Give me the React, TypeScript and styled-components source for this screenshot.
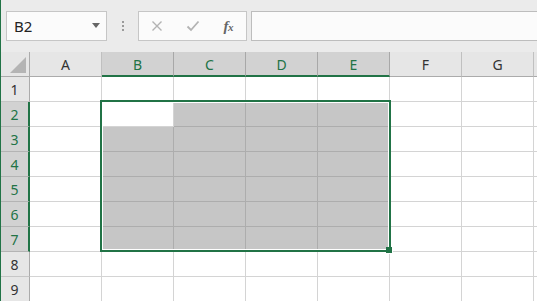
import React from "react";
import styled, { createGlobalStyle, css } from "styled-components";

const GREEN = "#217346";

const Global = createGlobalStyle`
  html, body { margin: 0; padding: 0; background: #ffffff; overflow: hidden; }
  body { font-family: "Noto Sans", "Liberation Sans", Arial, sans-serif; }
`;

const Window = styled.div`
  width: 537px;
  height: 301px;
  overflow: hidden;
  border-left: 1px solid ${GREEN};
  box-sizing: border-box;
  background: #ffffff;
`;

const Toolbar = styled.div`
  height: 52px;
  box-sizing: border-box;
  padding: 11px 0 0 5px;
  background: #ebebeb;
  display: flex;
  align-items: flex-start;
`;

const NameBox = styled.div`
  width: 101px;
  height: 30px;
  box-sizing: border-box;
  border: 1px solid #c6c6c6;
  background: #fbfbfb;
  display: flex;
  align-items: center;
  justify-content: space-between;
  padding: 0 6px 0 7px;
  font-size: 15px;
  color: #222;
`;

const Caret = styled.span`
  width: 0;
  height: 0;
  border-left: 4px solid transparent;
  border-right: 4px solid transparent;
  border-top: 5px solid #666;
  margin-top: -1px;
`;

const Grip = styled.div`
  width: 31px;
  height: 30px;
  display: flex;
  flex-direction: column;
  align-items: center;
  justify-content: center;
  gap: 2px;
`;

const Dot = styled.span`
  width: 2px;
  height: 2px;
  background: #9a9a9a;
`;

const FxBox = styled.div`
  width: 109px;
  height: 30px;
  box-sizing: border-box;
  border: 1px solid #c6c6c6;
  background: #fbfbfb;
  display: flex;
`;

const FxSlot = styled.div`
  width: 36px;
  height: 28px;
  display: flex;
  align-items: center;
  justify-content: center;
`;

const FxLabel = styled.span`
  font-family: "Liberation Serif", "Times New Roman", serif;
  font-style: italic;
  font-weight: bold;
  font-size: 15px;
  color: #666;
  letter-spacing: -0.5px;
  & > small { font-size: 11px; }
`;

const FormulaInput = styled.div`
  flex: 1;
  margin-left: 4px;
  height: 30px;
  box-sizing: border-box;
  border: 1px solid #bdbdbd;
  border-right: none;
  background: #fbfbfb;
`;

const GridWrap = styled.div`
  position: relative;
`;

const Grid = styled.div`
  display: grid;
  grid-template-columns: 29px repeat(8, 72px);
  grid-template-rows: repeat(10, 25px);
`;

const Cell = styled.div<{ $fill?: boolean }>`
  box-sizing: border-box;
  border-right: 1px solid ${(p) => (p.$fill ? "#adadad" : "#d4d4d4")};
  border-bottom: 1px solid ${(p) => (p.$fill ? "#adadad" : "#d4d4d4")};
  background: ${(p) => (p.$fill ? "#c6c6c6" : "#ffffff")};
`;

const headerBase = css`
  box-sizing: border-box;
  display: flex;
  align-items: center;
  justify-content: center;
  font-size: 14px;
  padding-top: 1px;
`;

const ColHead = styled.div<{ $sel?: boolean }>`
  ${headerBase}
  background: ${(p) => (p.$sel ? "#d2d2d2" : "#e6e6e6")};
  color: ${(p) => (p.$sel ? GREEN : "#333")};
  border-right: 1px solid ${(p) => (p.$sel ? "#a8a8a8" : "#c0c0c0")};
  border-bottom: ${(p) => (p.$sel ? `2px solid ${GREEN}` : "1px solid #ababab")};
`;

const RowHead = styled.div<{ $sel?: boolean }>`
  ${headerBase}
  background: ${(p) => (p.$sel ? "#d2d2d2" : "#e6e6e6")};
  color: ${(p) => (p.$sel ? GREEN : "#333")};
  border-right: ${(p) => (p.$sel ? `2px solid ${GREEN}` : "1px solid #ababab")};
  border-bottom: 1px solid ${(p) => (p.$sel ? "#b4b4b4" : "#c6c6c6")};
  padding-right: ${(p) => (p.$sel ? "0" : "1px")};
`;

const Corner = styled.div`
  box-sizing: border-box;
  background: #e6e6e6;
  border-right: 1px solid #ababab;
  border-bottom: 1px solid #ababab;
  display: flex;
  align-items: flex-end;
  justify-content: flex-end;
  padding: 0 3px 3px 0;
`;

const Selection = styled.div`
  position: absolute;
  left: 99px;
  top: 48px;
  width: 291px;
  height: 152px;
  box-sizing: border-box;
  border: 2px solid ${GREEN};
  box-shadow: inset 0 0 0 1px #ffffff;
  pointer-events: none;
`;

const Handle = styled.div`
  position: absolute;
  right: -4px;
  bottom: -4px;
  width: 7px;
  height: 7px;
  box-sizing: border-box;
  background: ${GREEN};
  border: 1px solid #ffffff;
  border-top: none;
  border-left: none;
`;

const cols = ["A", "B", "C", "D", "E", "F", "G", "H"];
const selCols = new Set(["B", "C", "D", "E"]);

export default function App() {
  const rows = [1, 2, 3, 4, 5, 6, 7, 8, 9];
  return (
    <Window>
      <Global />
      <Toolbar>
        <NameBox>
          <span>B2</span>
          <Caret />
        </NameBox>
        <Grip>
          <Dot />
          <Dot />
          <Dot />
        </Grip>
        <FxBox>
          <FxSlot>
            <svg width="12" height="12" viewBox="0 0 12 12">
              <path d="M1.5 1.5 L10.5 10.5 M10.5 1.5 L1.5 10.5" stroke="#b3b3b3" strokeWidth="1.4" fill="none" />
            </svg>
          </FxSlot>
          <FxSlot>
            <svg width="14" height="12" viewBox="0 0 14 12">
              <path d="M1.5 6.5 L5 10 L12.5 1.5" stroke="#b3b3b3" strokeWidth="1.8" fill="none" />
            </svg>
          </FxSlot>
          <FxSlot>
            <FxLabel>
              f<small>x</small>
            </FxLabel>
          </FxSlot>
        </FxBox>
        <FormulaInput />
      </Toolbar>
      <GridWrap>
        <Grid>
          <Corner>
            <svg width="16" height="16" viewBox="0 0 16 16">
              <path d="M16 0 L16 16 L0 16 Z" fill="#b4b4b4" />
            </svg>
          </Corner>
          {cols.map((c) => (
            <ColHead key={c} $sel={selCols.has(c)}>
              {c === "H" ? null : c}
            </ColHead>
          ))}
          {rows.map((r) => (
            <React.Fragment key={r}>
              <RowHead $sel={r >= 2 && r <= 7}>{r}</RowHead>
              {cols.map((c) => {
                const inSel = r >= 2 && r <= 7 && selCols.has(c);
                const active = r === 2 && c === "B";
                return <Cell key={c} $fill={inSel && !active} />;
              })}
            </React.Fragment>
          ))}
        </Grid>
        <Selection>
          <Handle />
        </Selection>
      </GridWrap>
    </Window>
  );
}
